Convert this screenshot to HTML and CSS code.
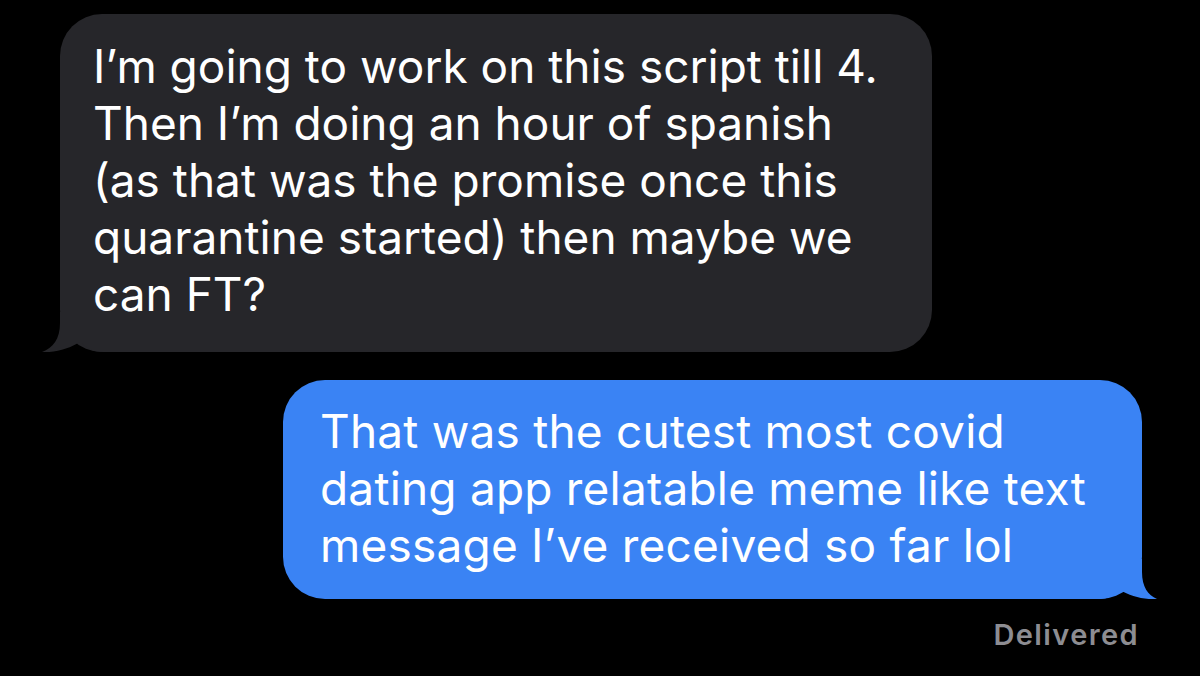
FILE: index.html
```html
<!DOCTYPE html>
<html>
<head>
<meta charset="utf-8">
<link rel="stylesheet" href="styles.css">
</head>
<body>
<div class="thread">
  <div class="bubble received">
    <p class="text">I’m going to work on this script till 4.<br>Then I’m doing an hour of spanish<br>(as that was the promise once this<br>quarantine started) then maybe we<br>can FT?</p>
    <svg class="tail tail-left" viewBox="0 0 80 40" width="80" height="40"><path d="M20,0 L20,11 C20,27 13,36 2,40 C16,41 30,36 40,30 C48,37 54,40 63,40 L80,40 L80,0 Z"/></svg>
  </div>
  <div class="bubble sent">
    <p class="text">That was the cutest most covid<br>dating app relatable meme like text<br>message I’ve received so far lol</p>
    <svg class="tail tail-right" viewBox="0 0 80 40" width="80" height="40"><path d="M60,0 L60,13 C60,28 66,36 75,40 C62,41 48,37 38,31 C31,37 25,40 18,40 L0,40 L0,0 Z"/></svg>
  </div>
  <div class="status">Delivered</div>
</div>
</body>
</html>
```

FILE: styles.css
```css
html, body {
  margin: 0;
  padding: 0;
  background: #000;
}
body {
  width: 1200px;
  height: 676px;
  overflow: hidden;
  font-family: Inter, "Noto Sans", "Liberation Sans", sans-serif;
}
.thread {
  display: flex;
  flex-direction: column;
  padding-top: 14px;
}
.bubble {
  position: relative;
  box-sizing: border-box;
  border-radius: 42px;
  color: #fff;
}
.text {
  margin: 0;
  font-size: 46px;
  line-height: 57px;
  white-space: nowrap;
}
.received {
  background: #26262a;
  width: 872px;
  margin-left: 60px;
  padding: 24px 0 29px 33px;
}
.sent {
  background: #3a83f4;
  width: 859px;
  margin-left: auto;
  margin-right: 58px;
  margin-top: 28px;
  padding: 23px 0 25px 37px;
}
.sent .text {
  letter-spacing: 0.2px;
}
.tail {
  position: absolute;
  bottom: 0;
  display: block;
}
.tail-left {
  left: -20px;
  fill: #26262a;
}
.tail-right {
  right: -20px;
  fill: #3a83f4;
}
.status {
  align-self: flex-end;
  margin-right: 61px;
  margin-top: 18px;
  font-size: 29px;
  font-weight: 600;
  color: #8d8d92;
  letter-spacing: 1.4px;
}
```
